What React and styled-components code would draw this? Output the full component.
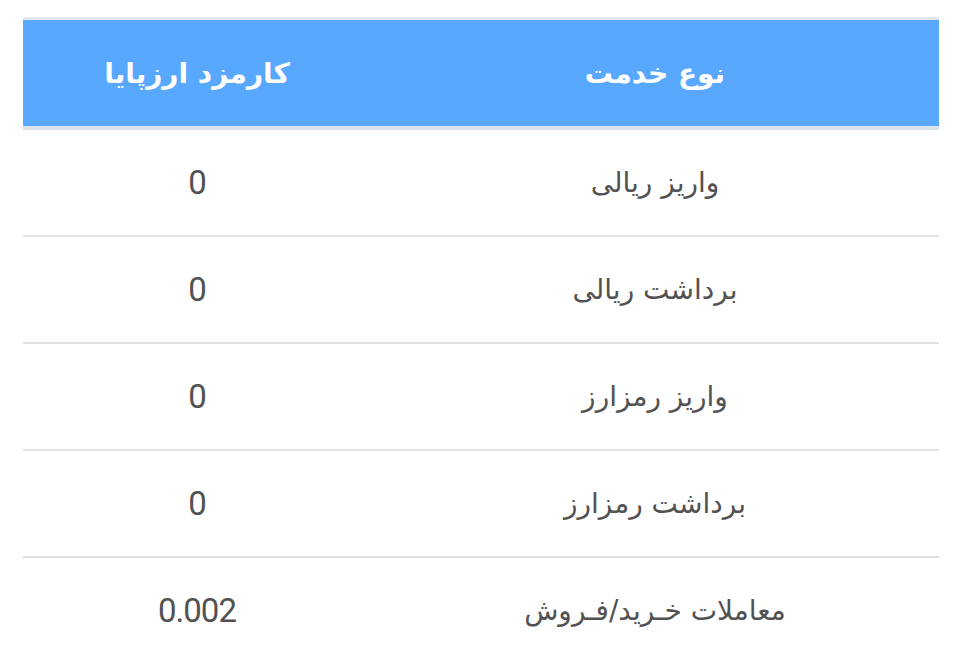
import React from "react";
import styled, { createGlobalStyle } from "styled-components";

const Global = createGlobalStyle`
  html, body { margin: 0; padding: 0; background: #fff; }
  body { font-family: Roboto, "DejaVu Sans", sans-serif; }
`;

const Wrap = styled.div`
  padding: 17px 16px 0 23px;
`;

const Table = styled.table`
  width: 916px;
  border-collapse: collapse;
  direction: rtl;
  table-layout: fixed;
  border-top: 3px solid #e3e7ec;
`;

const HeadCell = styled.th`
  background: #58a8ff;
  color: #fff;
  font-family: "DejaVu Sans", Roboto, sans-serif;
  font-weight: bold;
  font-size: 28px;
  height: 106px;
  padding: 0;
  text-align: center;
  border-bottom: 4px solid #dce3ea;
  width: ${(p) => p.$w}px;
`;

const Row = styled.tr`
  border-top: ${(p) => (p.$first ? "none" : "2px solid #e2e2e2")};
`;

const Cell = styled.td`
  height: 105px;
  padding: 0;
  text-align: center;
  color: #525252;
  font-size: ${(p) => (p.$num ? "33px" : "28px")};
  font-family: ${(p) => (p.$num ? "Roboto, sans-serif" : "'DejaVu Sans', Roboto, sans-serif")};
  letter-spacing: ${(p) => (p.$num ? "-1px" : "0")};
`;

const rows = [
  ["واریز ریالی", "0"],
  ["برداشت ریالی", "0"],
  ["واریز رمزارز", "0"],
  ["برداشت رمزارز", "0"],
  ["معاملات خـرید/فـروش", "0.002"],
];

export default function App() {
  return (
    <>
      <Global />
      <Wrap>
        <Table>
          <thead>
            <tr>
              <HeadCell $w={568}>نوع خدمت</HeadCell>
              <HeadCell $w={348}>کارمزد ارزپایا</HeadCell>
            </tr>
          </thead>
          <tbody>
            {rows.map(([name, fee], i) => (
              <Row key={i} $first={i === 0}>
                <Cell>{name}</Cell>
                <Cell $num>{fee}</Cell>
              </Row>
            ))}
          </tbody>
        </Table>
      </Wrap>
    </>
  );
}
